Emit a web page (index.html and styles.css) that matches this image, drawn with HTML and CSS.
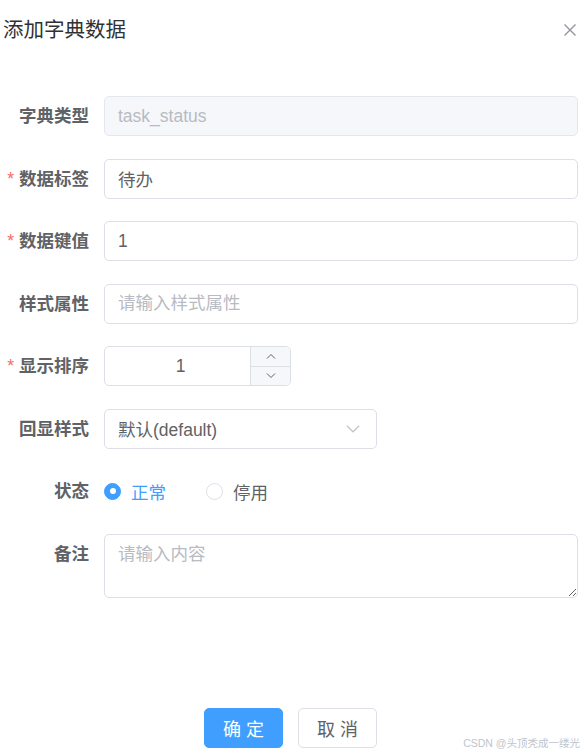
FILE: index.html
```html
<!DOCTYPE html>
<html lang="zh">
<head>
<meta charset="utf-8">
<title>添加字典数据</title>
<link rel="stylesheet" href="styles.css">
</head>
<body>
<div class="dialog">
  <div class="header">
    <span class="title">添加字典数据</span>
    <svg class="close" width="14" height="14" viewBox="0 0 14 14"><path d="M1.5 1.5 L12.5 12.5 M12.5 1.5 L1.5 12.5" stroke="#909399" stroke-width="1.3" fill="none"/></svg>
  </div>
  <div class="body">
    <div class="item">
      <label class="label">字典类型</label>
      <div class="content"><input class="input disabled" value="task_status" disabled></div>
    </div>
    <div class="item">
      <label class="label"><span class="req">*</span>数据标签</label>
      <div class="content"><input class="input" value="待办"></div>
    </div>
    <div class="item">
      <label class="label"><span class="req">*</span>数据键值</label>
      <div class="content"><input class="input" value="1"></div>
    </div>
    <div class="item">
      <label class="label">样式属性</label>
      <div class="content"><input class="input" placeholder="请输入样式属性"></div>
    </div>
    <div class="item">
      <label class="label"><span class="req">*</span>显示排序</label>
      <div class="content">
        <div class="number">
          <span class="num-val">1</span>
          <div class="num-ctrl">
            <span class="num-btn up"><svg width="10" height="6" viewBox="0 0 10 6"><path d="M1 5.5 L5 1.5 L9 5.5" stroke="#606266" stroke-width="1" fill="none"/></svg></span>
            <span class="num-btn"><svg width="10" height="6" viewBox="0 0 10 6"><path d="M1 0.5 L5 4.5 L9 0.5" stroke="#606266" stroke-width="1" fill="none"/></svg></span>
          </div>
        </div>
      </div>
    </div>
    <div class="item">
      <label class="label">回显样式</label>
      <div class="content">
        <div class="select">
          <span>默认(default)</span>
          <svg width="14" height="8" viewBox="0 0 14 8"><path d="M0.8 0.8 L7 6.8 L13.2 0.8" stroke="#C0C4CC" stroke-width="1.2" fill="none"/></svg>
        </div>
      </div>
    </div>
    <div class="item">
      <label class="label">状态</label>
      <div class="content radios">
        <span class="radio checked"><span class="circle"></span>正常</span>
        <span class="radio"><span class="circle"></span>停用</span>
      </div>
    </div>
    <div class="item">
      <label class="label">备注</label>
      <div class="content"><textarea class="textarea" placeholder="请输入内容"></textarea></div>
    </div>
  </div>
  <div class="footer">
    <button class="btn primary">确 定</button>
    <button class="btn">取 消</button>
  </div>
  <span class="watermark">CSDN @头顶秃成一缕光</span>
</div>
</body>
</html>
```
FILE: styles.css
```css
* { box-sizing: border-box; }
html, body { margin: 0; padding: 0; background: #fff; }
body { font-family: "Liberation Sans", "Noto Sans CJK SC", sans-serif; color: #606266; }
.dialog { width: 584px; height: 754px; position: relative; display: flex; flex-direction: column; }
.header { height: 60px; display: flex; align-items: center; justify-content: space-between; padding: 0 7px 0 3px; }
.title { font-size: 20.5px; color: #303133; line-height: 28px; }
.close { display: block; }
.body { padding: 36px 6px 0 4px; }
.item { display: flex; margin-bottom: 22.5px; }
.label { width: 100px; flex: none; padding-right: 15px; text-align: right; font-size: 17.5px; font-weight: bold; line-height: 40px; color: #606266; }
.req { color: #F56C6C; margin-right: 5px; font-weight: normal; }
.content { flex: 1; min-width: 0; }
.input { display: block; width: 100%; height: 40px; border: 1px solid #DCDFE6; border-radius: 5px; padding: 0 13px; font: inherit; font-size: 17.5px; color: #606266; outline: none; background: #fff; }
.input::placeholder, .textarea::placeholder { color: #B8BBC2; }
.input.disabled { background: #F5F7FA; border-color: #E4E7ED; color: #B8BBC2; }
.number { width: 187px; height: 40px; border: 1px solid #DCDFE6; border-radius: 5px; display: flex; overflow: hidden; }
.num-val { flex: 1; text-align: center; line-height: 38px; font-size: 17.5px; padding-left: 6px; }
.num-ctrl { width: 40px; display: flex; flex-direction: column; border-left: 1px solid #DCDFE6; background: #F5F7FA; }
.num-btn { flex: 1; display: flex; align-items: center; justify-content: center; }
.num-btn.up { border-bottom: 1px solid #DCDFE6; }
.select { width: 273px; height: 40px; border: 1px solid #DCDFE6; border-radius: 5px; display: flex; align-items: center; justify-content: space-between; padding: 0 16px 0 13px; font-size: 17.5px; }
.radios { display: flex; align-items: center; height: 40px; font-size: 17.5px; }
.radio { display: flex; align-items: center; margin-right: 40px; color: #606266; }
.circle { width: 17px; height: 17px; border-radius: 50%; border: 1px solid #DCDFE6; margin-right: 10px; background: #fff; position: relative; }
.radio.checked { color: #409EFF; }
.radio.checked .circle { background: #409EFF; border-color: #409EFF; }
.radio.checked .circle::after { content: ""; position: absolute; left: 50%; top: 50%; width: 6px; height: 6px; margin: -3px 0 0 -3px; border-radius: 50%; background: #fff; }
.textarea { display: block; width: 100%; height: 64px; border: 1px solid #DCDFE6; border-radius: 5px; padding: 6px 13px; font: inherit; font-size: 17.5px; line-height: 1.5; color: #606266; outline: none; resize: vertical; }
.footer { margin-top: auto; padding: 0 3px 6px 0; display: flex; justify-content: center; gap: 15px; }
.btn { width: 79px; height: 40px; border: 1px solid #DCDFE6; border-radius: 5px; background: #fff; color: #606266; font: inherit; font-size: 18px; padding: 0; }
.btn.primary { background: #409EFF; border-color: #409EFF; color: #fff; }
.watermark { position: absolute; right: 4px; bottom: 4px; font-size: 10.5px; color: #C0C4CC; }
```
